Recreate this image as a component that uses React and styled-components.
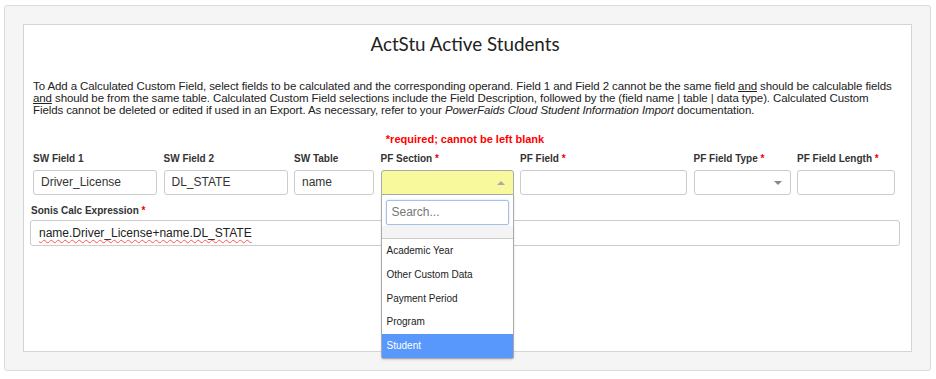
import React from 'react'
import styled, { createGlobalStyle } from 'styled-components'

const Global = createGlobalStyle`
  html, body { margin: 0; padding: 0; background: #fff; }
  body { font-family: "Liberation Sans", Arial, sans-serif; color: #333; }
`

const Outer = styled.div`
  margin: 5px 0 0 4px;
  width: 927px;
  height: 366px;
  box-sizing: border-box;
  background: #f5f5f5;
  border: 1px solid #dcdcdc;
  border-radius: 3px;
  padding: 18px;
`

const Panel = styled.div`
  height: 100%;
  box-sizing: border-box;
  background: #fff;
  border: 1px solid #d4d4d4;
  padding: 8px 11px 0 6px;
`

const Title = styled.h2`
  margin: 0;
  font-family: Lato, "Open Sans", sans-serif;
  font-weight: 400;
  font-size: 18.8px;
  line-height: 22px;
  text-align: center;
  color: #222;
`

const Intro = styled.p`
  margin: 24.5px 0 0 3px;
  max-width: 864px;
  font-size: 11.5px;
  letter-spacing: -0.1px;
  line-height: 12px;
  color: #222;
  u { text-decoration: underline; }
`

const Required = styled.div`
  margin-top: 17.5px;
  text-align: center;
  font-size: 11px;
  font-weight: bold;
  color: #f00;
`

const FieldRow = styled.div`
  display: flex;
  gap: 6.5px;
  margin: 7px 0 0 3px;
`

const Field = styled.div`
  width: ${p => p.$w}px;
  flex: none;
  position: relative;
`

const Label = styled.label`
  display: block;
  font-size: 10px;
  font-weight: bold;
  line-height: 14px;
  color: #333;
  margin-bottom: 4px;
  white-space: nowrap;
  span { color: #e00; }
`

const Box = styled.div`
  height: 25px;
  box-sizing: border-box;
  border: 1px solid #ccc;
  border-radius: 3px;
  background: ${p => p.$bg || '#fff'};
  font-size: 12px;
  line-height: 23px;
  padding: 0 7px;
  color: #333;
  position: relative;
  ${p => p.$open && 'border-bottom-left-radius: 0; border-bottom-right-radius: 0; border-color: #aaa;'}
`

const Arrow = styled.i`
  position: absolute;
  right: 8px;
  top: 10px;
  width: 0;
  height: 0;
  border-left: 4px solid transparent;
  border-right: 4px solid transparent;
  ${p => p.$up ? 'border-bottom: 4px solid #aaa;' : 'border-top: 4px solid #888;'}
`

const Dropdown = styled.div`
  position: absolute;
  left: 0;
  right: 0;
  top: 43px;
  background: #fff;
  border: 1px solid #aaa;
  border-top: none;
  border-radius: 0 0 3px 3px;
  box-shadow: 0 1px 2px rgba(0,0,0,0.15);
  z-index: 5;
`

const SearchWrap = styled.div`
  padding: 5px 4px 0 4px;
  background: #fff;
`

const Search = styled.div`
  height: 25px;
  box-sizing: border-box;
  border: 1px solid #a9c1dd;
  border-radius: 2px;
  box-shadow: 0 0 2px rgba(102,175,233,0.5);
  font-size: 12px;
  line-height: 23px;
  padding: 0 5px;
  color: #777;
`

const Band = styled.div`
  height: 12px;
  background: #f4f4f4;
  border-bottom: 1px solid #ccc;
  margin-top: 1px;
`

const Option = styled.div`
  height: 23.8px;
  line-height: 23.8px;
  font-size: 10px;
  padding-left: 5px;
  color: ${p => p.$active ? '#fff' : '#222'};
  background: ${p => p.$active ? '#5897fb' : '#fff'};
`

const ExprField = styled.div`
  margin-top: 9px;
`

const ExprLabel = styled(Label)`
  margin: 0 0 2px 1px;
`

const ExprBox = styled(Box)`
  height: 26px;
  line-height: 24px;
  padding: 0 8px;
  color: #222;
  em {
    font-style: normal;
    text-decoration: underline wavy #f55;
    text-decoration-thickness: 1px;
    text-underline-offset: 2px;
  }
`

const fields = [
  { label: 'SW Field 1', w: 124, value: 'Driver_License' },
  { label: 'SW Field 2', w: 124, value: 'DL_STATE' },
  { label: 'SW Table', w: 80, value: 'name' },
  { label: 'PF Section', w: 133, req: true, select: 'open' },
  { label: 'PF Field', w: 167, req: true },
  { label: 'PF Field Type', w: 97, req: true, select: 'closed' },
  { label: 'PF Field Length', w: 98, req: true },
]

const sections = ['Academic Year', 'Other Custom Data', 'Payment Period', 'Program', 'Student']

export default function App() {
  return (
    <>
      <Global />
      <Outer>
        <Panel>
          <Title>ActStu Active Students</Title>
          <Intro>
            To Add a Calculated Custom Field, select fields to be calculated and the corresponding operand. Field 1 and Field 2 cannot be the same field <u>and</u> should be calculable fields <u>and</u> should be from the same table. Calculated Custom Field selections include the Field Description, followed by the (field name | table | data type). Calculated Custom Fields cannot be deleted or edited if used in an Export. As necessary, refer to your <i>PowerFaids Cloud Student Information Import</i> documentation.
          </Intro>
          <Required>*required; cannot be left blank</Required>
          <FieldRow>
            {fields.map(f => (
              <Field key={f.label} $w={f.w}>
                <Label>{f.label}{f.req && <span> *</span>}</Label>
                <Box $bg={f.select === 'open' ? '#f7f99c' : undefined} $open={f.select === 'open'}>
                  {f.value}
                  {f.select && <Arrow $up={f.select === 'open'} />}
                </Box>
                {f.select === 'open' && (
                  <Dropdown>
                    <SearchWrap>
                      <Search>Search...</Search>
                    </SearchWrap>
                    <Band />
                    {sections.map(s => (
                      <Option key={s} $active={s === 'Student'}>{s}</Option>
                    ))}
                  </Dropdown>
                )}
              </Field>
            ))}
          </FieldRow>
          <ExprField>
            <ExprLabel>Sonis Calc Expression<span> *</span></ExprLabel>
            <ExprBox><em>name.Driver_License+name.DL_STATE</em></ExprBox>
          </ExprField>
        </Panel>
      </Outer>
    </>
  )
}
